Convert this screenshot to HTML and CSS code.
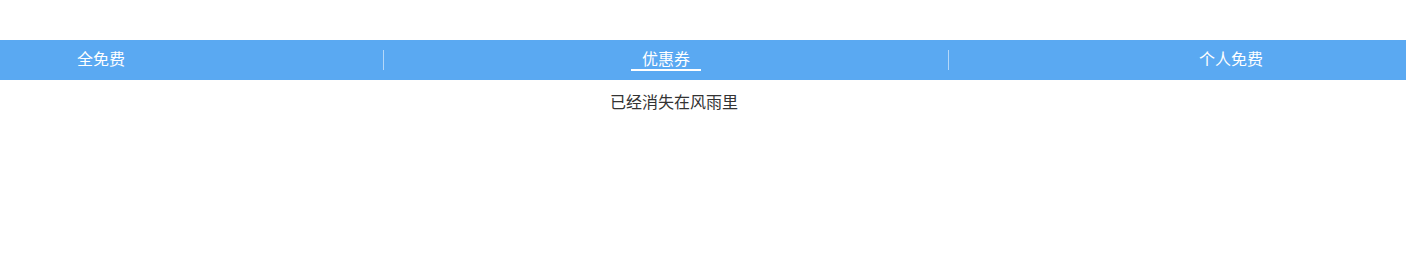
FILE: index.html
```html
<!DOCTYPE html>
<html lang="zh-CN">

<head>
    <meta charset="UTF-8">
    <meta name="viewport" content="width=device-width, initial-scale=1.0">
    <title>优惠券</title>
    <link rel="stylesheet" href="styles.css">
</head>

<body>
    <div class="page">
        <div class="tabs">
            <div class="tab tab-all"><span>全免费</span></div>
            <i class="divider"></i>
            <div class="tab tab-coupon active"><span>优惠券</span></div>
            <i class="divider"></i>
            <div class="tab tab-self"><span>个人免费</span></div>
        </div>
        <p class="empty">已经消失在风雨里</p>
    </div>
</body>

</html>
```

FILE: styles.css
```css
* {
    margin: 0;
    padding: 0;
    box-sizing: border-box;
}

body {
    background-color: #fff;
    font-family: "Noto Sans CJK SC", "Liberation Sans", sans-serif;
    font-size: 16px;
    color: #333;
}

.page {
    padding-top: 40px;
}

/* 顶部标签栏 */
.tabs {
    display: flex;
    height: 40px;
    align-items: center;
    background-color: #5aa9f2;
}

.tab {
    display: flex;
    height: 100%;
    align-items: center;
    color: #fff;
    line-height: 20px;
}

.tab span {
    display: block;
    margin-top: -2px;
    padding: 0 11px 1px;
    border-bottom: 2px solid transparent;
}

.tab-all {
    width: 383px;
    padding-left: 66px;
}

.tab-coupon {
    width: 564px;
    justify-content: center;
}

.tab-self {
    flex: 1;
    padding-left: 239px;
}

/* 当前选中的标签加下划线 */
.tab.active span {
    border-bottom-color: #fff;
}

.divider {
    width: 1px;
    height: 20px;
    background-color: rgba(255, 255, 255, 0.55);
}

/* 空列表提示 */
.empty {
    margin-top: 10px;
    padding-right: 58px;
    text-align: center;
    line-height: 22px;
    color: #333;
}
```
